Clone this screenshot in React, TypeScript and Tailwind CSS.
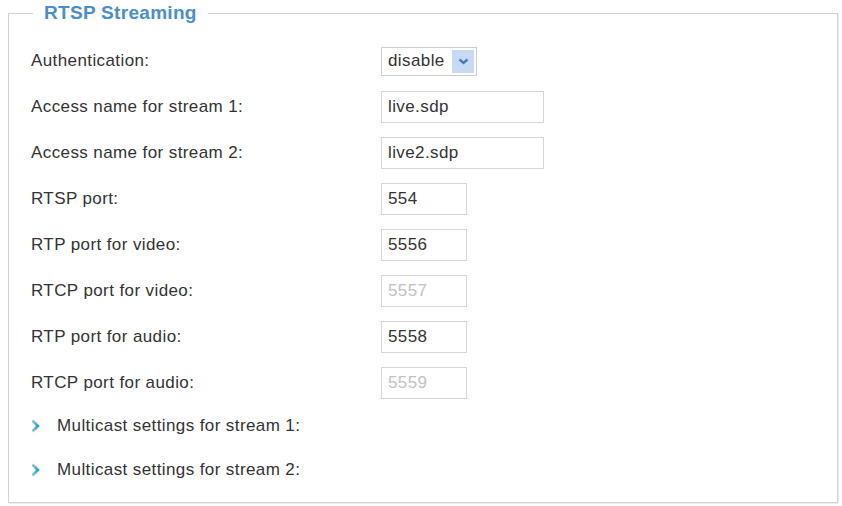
import React from "react";

const font = { fontFamily: '"Liberation Sans", Arial, sans-serif' };

interface Row {
  label: string;
  value?: string;
  kind: "select" | "wide" | "short";
  disabled?: boolean;
}

const rows: Row[] = [
  { label: "Authentication:", value: "disable", kind: "select" },
  { label: "Access name for stream 1:", value: "live.sdp", kind: "wide" },
  { label: "Access name for stream 2:", value: "live2.sdp", kind: "wide" },
  { label: "RTSP port:", value: "554", kind: "short" },
  { label: "RTP port for video:", value: "5556", kind: "short" },
  { label: "RTCP port for video:", value: "5557", kind: "short", disabled: true },
  { label: "RTP port for audio:", value: "5558", kind: "short" },
  { label: "RTCP port for audio:", value: "5559", kind: "short", disabled: true },
];

function Chevron() {
  return (
    <svg width="9" height="14" viewBox="0 0 9 14" className="shrink-0">
      <defs>
        <linearGradient id="chev" x1="0" y1="0" x2="0" y2="1">
          <stop offset="0" stopColor="#7fd0ee" />
          <stop offset="0.5" stopColor="#2f95d4" />
          <stop offset="1" stopColor="#7fd0ee" />
        </linearGradient>
      </defs>
      <path d="M1.5 1.5 L7 7 L1.5 12.5" fill="none" stroke="url(#chev)" strokeWidth="2.6" />
    </svg>
  );
}

function Field({ row }: { row: Row }) {
  if (row.kind === "select") {
    return (
      <div className="flex items-center h-[29px] w-[96px] border border-[#c8ccd2] bg-white pl-[6px] pr-[2px]">
        <span className="flex-1 text-[#333]">{row.value}</span>
        <span className="flex items-center justify-center w-[22px] h-[23px] bg-[#c6daf4]">
          <svg width="11" height="7" viewBox="0 0 11 7">
            <path d="M1.5 1.5 L5.5 5 L9.5 1.5" fill="none" stroke="#4a78c4" strokeWidth="2.4" />
          </svg>
        </span>
      </div>
    );
  }
  return (
    <div
      className={`flex items-center h-[32px] border border-[#d6d6d6] bg-white px-[6px] ${
        row.kind === "wide" ? "w-[163px]" : "w-[86px]"
      } ${row.disabled ? "text-[#c2c2c2]" : "text-[#333]"}`}
    >
      {row.value}
    </div>
  );
}

export default function App() {
  return (
    <div className="w-[842px] h-[506px] bg-white pt-[2px] pl-[8px]" style={font}>
      <fieldset className="w-[830px] h-[501px] border border-[#d2d2d2] shadow-[1px_1px_0_#ececec]">
        <legend className="ml-[24px] px-[11px] text-[19px] leading-[22px] font-bold text-[#4a8ece] tracking-[0.3px]">
          RTSP Streaming
        </legend>
        <div className="pl-[22px] pt-[14px] text-[17px] text-[#333] tracking-[0.4px]">
          {rows.map((r) => (
            <div key={r.label} className="flex items-center h-[46px]">
              <div className="w-[350px]">{r.label}</div>
              <Field row={r} />
            </div>
          ))}
          <div className="-mt-[2px]">
            {["Multicast settings for stream 1:", "Multicast settings for stream 2:"].map((t) => (
              <div key={t} className="flex items-center h-[44px] gap-[17px]">
                <Chevron />
                <span>{t}</span>
              </div>
            ))}
          </div>
        </div>
      </fieldset>
    </div>
  );
}
